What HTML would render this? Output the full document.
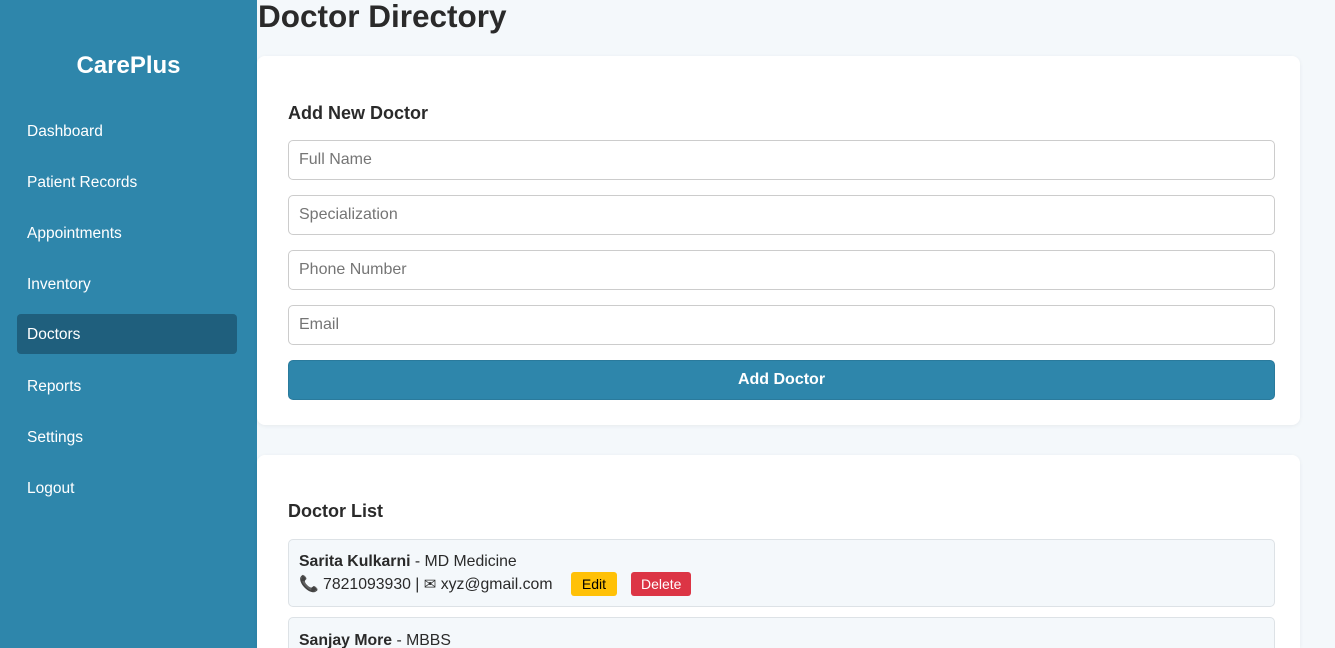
<!DOCTYPE html>
<html style="height:648px;overflow:hidden"><head><style>
*{box-sizing:border-box;margin:0;padding:0}
body{width:1335px;height:648px;overflow:hidden;background:#f4f8fb;font-family:"Liberation Sans","DejaVu Sans",sans-serif;color:#2a2a2a;position:relative}
.side{position:absolute;left:0;top:0;width:257px;height:648px;background:#2e86ab;color:#fff}
.side h2{position:absolute;top:52px;left:0;width:257px;text-align:center;font-size:24px;font-weight:bold}
.nav{position:absolute;left:17px;width:220px;height:40px;line-height:42px;padding-left:10px;font-size:15.5px;border-radius:4px}
.nav.act{background:#1f5f7d}
h1{position:absolute;left:258px;top:-2px;font-size:31.5px;font-weight:bold;color:#2a2a2a}
.card{position:absolute;left:257px;width:1043px;background:#fff;border-radius:8px;box-shadow:0 1px 4px rgba(0,0,0,.06);overflow:hidden}
.card h3{position:absolute;left:31px;font-size:18px;font-weight:bold}
.inp{position:absolute;left:31px;width:987px;height:40px;border:1px solid #ccc;border-radius:5px;padding-left:10px;line-height:38px;color:#757575;font-size:16px}
.btn{position:absolute;left:31px;top:304px;width:987px;height:40px;background:#2e86ab;border-radius:5px;color:#fff;font-weight:bold;text-align:center;line-height:38px;font-size:16px;border:1px solid #2a7a9c}
.item{position:absolute;left:31px;width:987px;background:#f4f8fb;border:1px solid #dde2e6;border-radius:5px;padding:12px 10px;font-size:15.8px;line-height:21px}
.e{display:inline-block;background:#ffc107;color:#000;font-size:14px;padding:0 11px;height:24px;line-height:24px;border-radius:3px;margin-left:14px}
.d{display:inline-block;background:#dc3545;color:#fff;font-size:14px;padding:0 10px;height:24px;line-height:24px;border-radius:3px;margin-left:14px}
</style></head><body>
<div class="side"><h2>CarePlus</h2>
<div class="nav" style="top:111px">Dashboard</div>
<div class="nav" style="top:162px">Patient Records</div>
<div class="nav" style="top:213px">Appointments</div>
<div class="nav" style="top:264px">Inventory</div>
<div class="nav act" style="top:314px">Doctors</div>
<div class="nav" style="top:366px">Reports</div>
<div class="nav" style="top:417px">Settings</div>
<div class="nav" style="top:468px">Logout</div>
</div>
<h1>Doctor Directory</h1>
<div class="card" style="top:56px;height:369px">
<h3 style="top:47px">Add New Doctor</h3>
<div class="inp" style="top:84px">Full Name</div>
<div class="inp" style="top:139px">Specialization</div>
<div class="inp" style="top:194px">Phone Number</div>
<div class="inp" style="top:249px">Email</div>
<div class="btn">Add Doctor</div>
</div>
<div class="card" style="top:455px;height:193px;border-bottom-left-radius:0;border-bottom-right-radius:0">
<h3 style="top:46px">Doctor List</h3>
<div class="item" style="top:84px;height:68px;padding-top:11px"><b>Sarita Kulkarni</b> - MD Medicine<br><span style="color:#b00">&#128222;</span> 7821093930 | <span style="font-size:15px">&#9993;</span> xyz@gmail.com <span class="e">Edit</span><span class="d">Delete</span></div>
<div class="item" style="top:162px;height:60px;padding-top:12px"><b>Sanjay More</b> - MBBS</div>
</div>
</body></html>
